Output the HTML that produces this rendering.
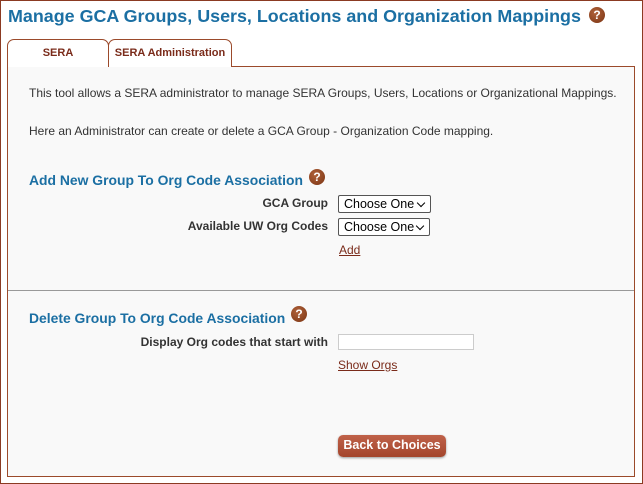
<!DOCTYPE html>
<html><head><style>
*{box-sizing:border-box}
body{margin:0;width:643px;height:484px;background:#fff;font-family:"Liberation Sans",Arial,sans-serif;position:relative;overflow:hidden}
.frame{position:absolute;left:0;top:0;width:643px;height:484px;border:1px solid #8b3a22}
.abs{position:absolute;white-space:nowrap}
h1{position:absolute;left:8px;top:6px;margin:0;font-size:17.9px;font-weight:bold;color:#1b6fa3;white-space:nowrap}
.q{position:absolute;width:16px;height:16px;border-radius:50%;background:radial-gradient(circle at 40% 35%,#b0623a,#7a3413);color:#fff;font-weight:bold;font-size:12px;text-align:center;line-height:16px}
.tab{position:absolute;top:39px;height:28px;border:1px solid #9b4a2b;border-bottom:none;border-radius:7px 7px 0 0;background:#fff;font-size:11px;font-weight:bold;color:#7a2b1a;text-align:center;line-height:26px}
.panel{position:absolute;left:7px;top:66px;width:628px;height:411px;border:1px solid #9b4a2b;background:#f9f9f9}
.t{font-size:12px;color:#333}
.h{font-size:13.9px;font-weight:bold;color:#1b6fa3}
.lbl{font-size:12px;font-weight:bold;color:#333;text-align:right}
.sel{position:absolute;height:18px;border:1px solid #555;border-radius:2px;background:#fff;font-size:12.5px;color:#000;padding-left:5px;line-height:16px}
.sel:after{content:"";position:absolute;right:6px;top:4px;width:5px;height:5px;border-right:1.6px solid #000;border-bottom:1.6px solid #000;transform:rotate(45deg)}
.lnk{font-size:12px;color:#7a2b1a;text-decoration:underline;text-decoration-color:#7a2b1a}
.btn{position:absolute;left:338px;top:435px;width:108px;height:22px;border-radius:5px;background:linear-gradient(#c0624a,#a3452c);color:#fff;font-weight:bold;font-size:12.5px;text-align:center;line-height:21px;box-shadow:0 1px 2px #999}
</style></head><body>
<div class="frame"></div>
<h1>Manage GCA Groups, Users, Locations and Organization Mappings</h1>
<div class="q" style="left:589px;top:7px">?</div>
<div class="panel"></div>
<div class="tab" style="left:7px;width:102px;">SERA</div>
<div class="tab" style="left:108px;width:124px;">SERA Administration</div>
<div class="abs t" style="left:29px;top:86px">This tool allows a SERA administrator to manage SERA Groups, Users, Locations or Organizational Mappings.</div>
<div class="abs t" style="left:29px;top:124px">Here an Administrator can create or delete a GCA Group - Organization Code mapping.</div>
<div class="abs h" style="left:29px;top:172px">Add New Group To Org Code Association</div>
<div class="q" style="left:309px;top:169px">?</div>
<div class="abs lbl" style="right:315px;top:196px">GCA Group</div>
<div class="sel" style="left:338px;top:195px;width:93px">Choose One</div>
<div class="abs lbl" style="right:315px;top:219px">Available UW Org Codes</div>
<div class="sel" style="left:338px;top:218px;width:92px">Choose One</div>
<div class="abs lnk" style="left:339px;top:243px">Add</div>
<div style="position:absolute;left:8px;top:290px;width:626px;height:1px;background:#999"></div>
<div class="abs h" style="left:29px;top:310px">Delete Group To Org Code Association</div>
<div class="q" style="left:291px;top:306px">?</div>
<div class="abs lbl" style="right:315px;top:335px">Display Org codes that start with</div>
<div style="position:absolute;left:338px;top:334px;width:136px;height:16px;border:1px solid #ccc;background:#fff"></div>
<div class="abs lnk" style="left:338px;top:358px">Show Orgs</div>
<div class="btn">Back to Choices</div>
</body></html>
